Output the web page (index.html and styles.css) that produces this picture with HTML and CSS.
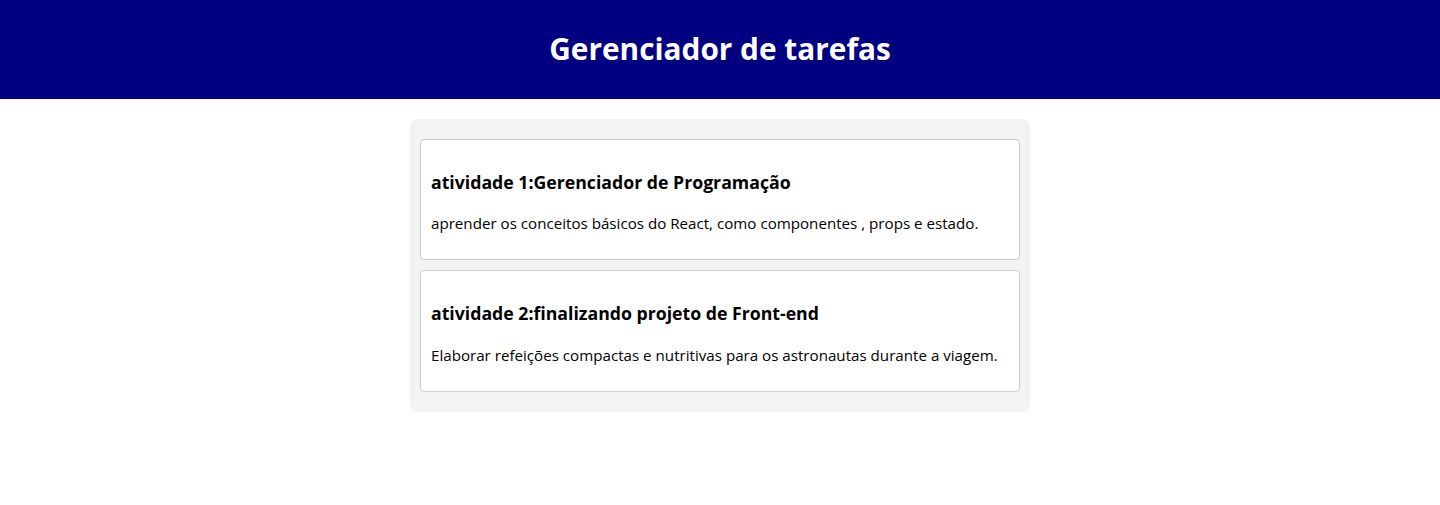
FILE: index.html
```
<!DOCTYPE html>
<html lang="pt-BR">
<head>
<meta charset="utf-8">
<title>Gerenciador de tarefas</title>
<link rel="stylesheet" href="styles.css">
</head>
<body>
<header class="topbar">
  <h1 class="topbar-title">Gerenciador de tarefas</h1>
</header>
<main class="task-list">
  <section class="task-card">
    <h3 class="task-title">atividade 1:Gerenciador de Programação</h3>
    <p class="task-desc">aprender os conceitos básicos do React, como componentes , props e estado.</p>
  </section>
  <section class="task-card">
    <h3 class="task-title">atividade 2:finalizando projeto de Front-end</h3>
    <p class="task-desc">Elaborar refeições compactas e nutritivas para os astronautas durante a viagem.</p>
  </section>
</main>
</body>
</html>
```

FILE: styles.css
```
* { box-sizing: border-box; }

body {
  margin: 0;
  background: #ffffff;
  font-family: "Open Sans", "Noto Sans", sans-serif;
  color: #000;
}

.topbar {
  background: #000080;
  height: 99px;
  display: flex;
  align-items: center;
  justify-content: center;
}

.topbar-title {
  margin: 0;
  color: #fff;
  font-size: 29.8px;
  font-weight: 700;
  line-height: 42px;
  padding-bottom: 2px;
}

.task-list {
  display: block;
  width: 620px;
  margin: 20px auto 0;
  padding: 10px;
  background: #f3f3f3;
  border-radius: 8px;
}

.task-card {
  background: #fff;
  border: 1px solid #cccccc;
  border-radius: 4px;
  padding: 10px;
  margin: 10px 0;
}

.task-title {
  font-size: 17.7px;
  font-weight: 700;
  margin: 19.72px 0 18.72px;
  line-height: 25px;
}

.task-desc {
  font-size: 15.15px;
  margin: 16px 0 15px;
  line-height: 21px;
}
```
